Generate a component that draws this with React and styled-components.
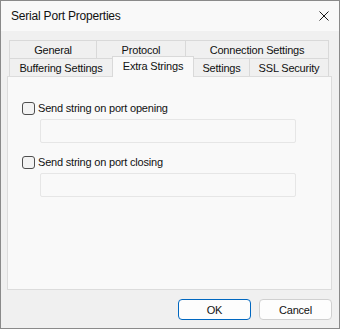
import React from "react";
import styled, { createGlobalStyle } from "styled-components";

const Global = createGlobalStyle`
  html, body { margin: 0; padding: 0; background: #f0f0f0; }
  * { box-sizing: border-box; }
`;

const Window = styled.div`
  width: 340px;
  height: 329px;
  border: 1px solid #8a8a8a;
  background: #f0f0f0;
  display: flex;
  flex-direction: column;
  font-family: "Liberation Sans", Arial, sans-serif;
  font-size: 11px;
  letter-spacing: -0.2px;
  color: #111;
`;

const TitleBar = styled.div`
  height: 30px;
  flex: none;
  background: #f9f9f9;
  display: flex;
  align-items: center;
  justify-content: space-between;
  padding: 0 10px 0 10px;
`;

const Title = styled.span`
  font-size: 12px;
  letter-spacing: -0.2px;
  color: #111;
`;

const CloseIcon = styled.svg`
  width: 10px;
  height: 10px;
  margin-top: -1px;
`;

const Body = styled.div`
  flex: 1;
  display: flex;
  flex-direction: column;
  padding: 9px 7px 8px 6px;
`;

const TabStrip = styled.div`
  display: flex;
  flex-direction: column;
  margin-left: 2px;
`;

const TabRow = styled.div`
  display: flex;
  height: 18px;
  align-items: flex-end;
`;

const Tab = styled.div`
  width: ${(p) => p.$w}px;
  height: ${(p) => (p.$active ? 21 : 18)}px;
  margin-left: -1px;
  &:first-child { margin-left: 0; }
  margin-bottom: ${(p) => (p.$active ? -1 : 0)}px;
  border: 1px solid #d9d9d9;
  border-bottom: none;
  background: ${(p) => (p.$active ? "#f9f9f9" : "#f0f0f0")};
  display: flex;
  align-items: center;
  justify-content: center;
  padding-bottom: ${(p) => (p.$active ? 2 : 0)}px;
  position: relative;
  z-index: ${(p) => (p.$active ? 2 : 0)};
  white-space: nowrap;
  color: #111;
`;

const Panel = styled.div`
  flex: 1;
  background: #f9f9f9;
  border: 1px solid #dcdcdc;
  padding: 24px 14px;
  display: flex;
  flex-direction: column;
`;

const Group = styled.div`
  display: flex;
  flex-direction: column;
  & + & { margin-top: 12px; }
`;

const CheckRow = styled.label`
  display: flex;
  align-items: center;
  height: 14px;
  gap: 3px;
`;

const Box = styled.span`
  width: 13px;
  height: 13px;
  border: 1px solid #4f4f4f;
  border-radius: 3px;
  background: #f3f3f3;
  flex: none;
`;

const Field = styled.div`
  margin: 4px 0 0 18px;
  width: 256px;
  height: 24px;
  border: 1px solid #e6e6e6;
  border-radius: 2px;
  background: #f9f9f9;
`;

const ButtonRow = styled.div`
  display: flex;
  justify-content: flex-end;
  gap: 8px;
  margin-top: 9px;
`;

const Button = styled.button`
  width: 73px;
  height: 21px;
  border-radius: 4px;
  border: 1px solid ${(p) => (p.$primary ? "#0067c0" : "#d0d0d0")};
  background: #fdfdfd;
  font-family: inherit;
  font-size: 11px;
  letter-spacing: -0.2px;
  color: #111;
  padding: 0;
`;

const rows = [
  [
    { label: "General", w: 88 },
    { label: "Protocol", w: 90 },
    { label: "Connection Settings", w: 144 },
  ],
  [
    { label: "Buffering Settings", w: 104 },
    { label: "Extra Strings", w: 82, active: true },
    { label: "Settings", w: 57 },
    { label: "SSL Security", w: 80 },
  ],
];

export default function App() {
  return (
    <>
      <Global />
      <Window>
        <TitleBar>
          <Title>Serial Port Properties</Title>
          <CloseIcon viewBox="0 0 10 10">
            <path d="M0.5 0.5 L9.5 9.5 M9.5 0.5 L0.5 9.5" stroke="#1a1a1a" strokeWidth="1" fill="none" />
          </CloseIcon>
        </TitleBar>
        <Body>
          <TabStrip>
            {rows.map((r, i) => (
              <TabRow key={i}>
                {r.map((t) => (
                  <Tab key={t.label} $w={t.w} $active={t.active}>
                    {t.label}
                  </Tab>
                ))}
              </TabRow>
            ))}
          </TabStrip>
          <Panel>
            <Group>
              <CheckRow>
                <Box />
                Send string on port opening
              </CheckRow>
              <Field />
            </Group>
            <Group>
              <CheckRow>
                <Box />
                Send string on port closing
              </CheckRow>
              <Field />
            </Group>
          </Panel>
          <ButtonRow>
            <Button $primary>OK</Button>
            <Button>Cancel</Button>
          </ButtonRow>
        </Body>
      </Window>
    </>
  );
}
